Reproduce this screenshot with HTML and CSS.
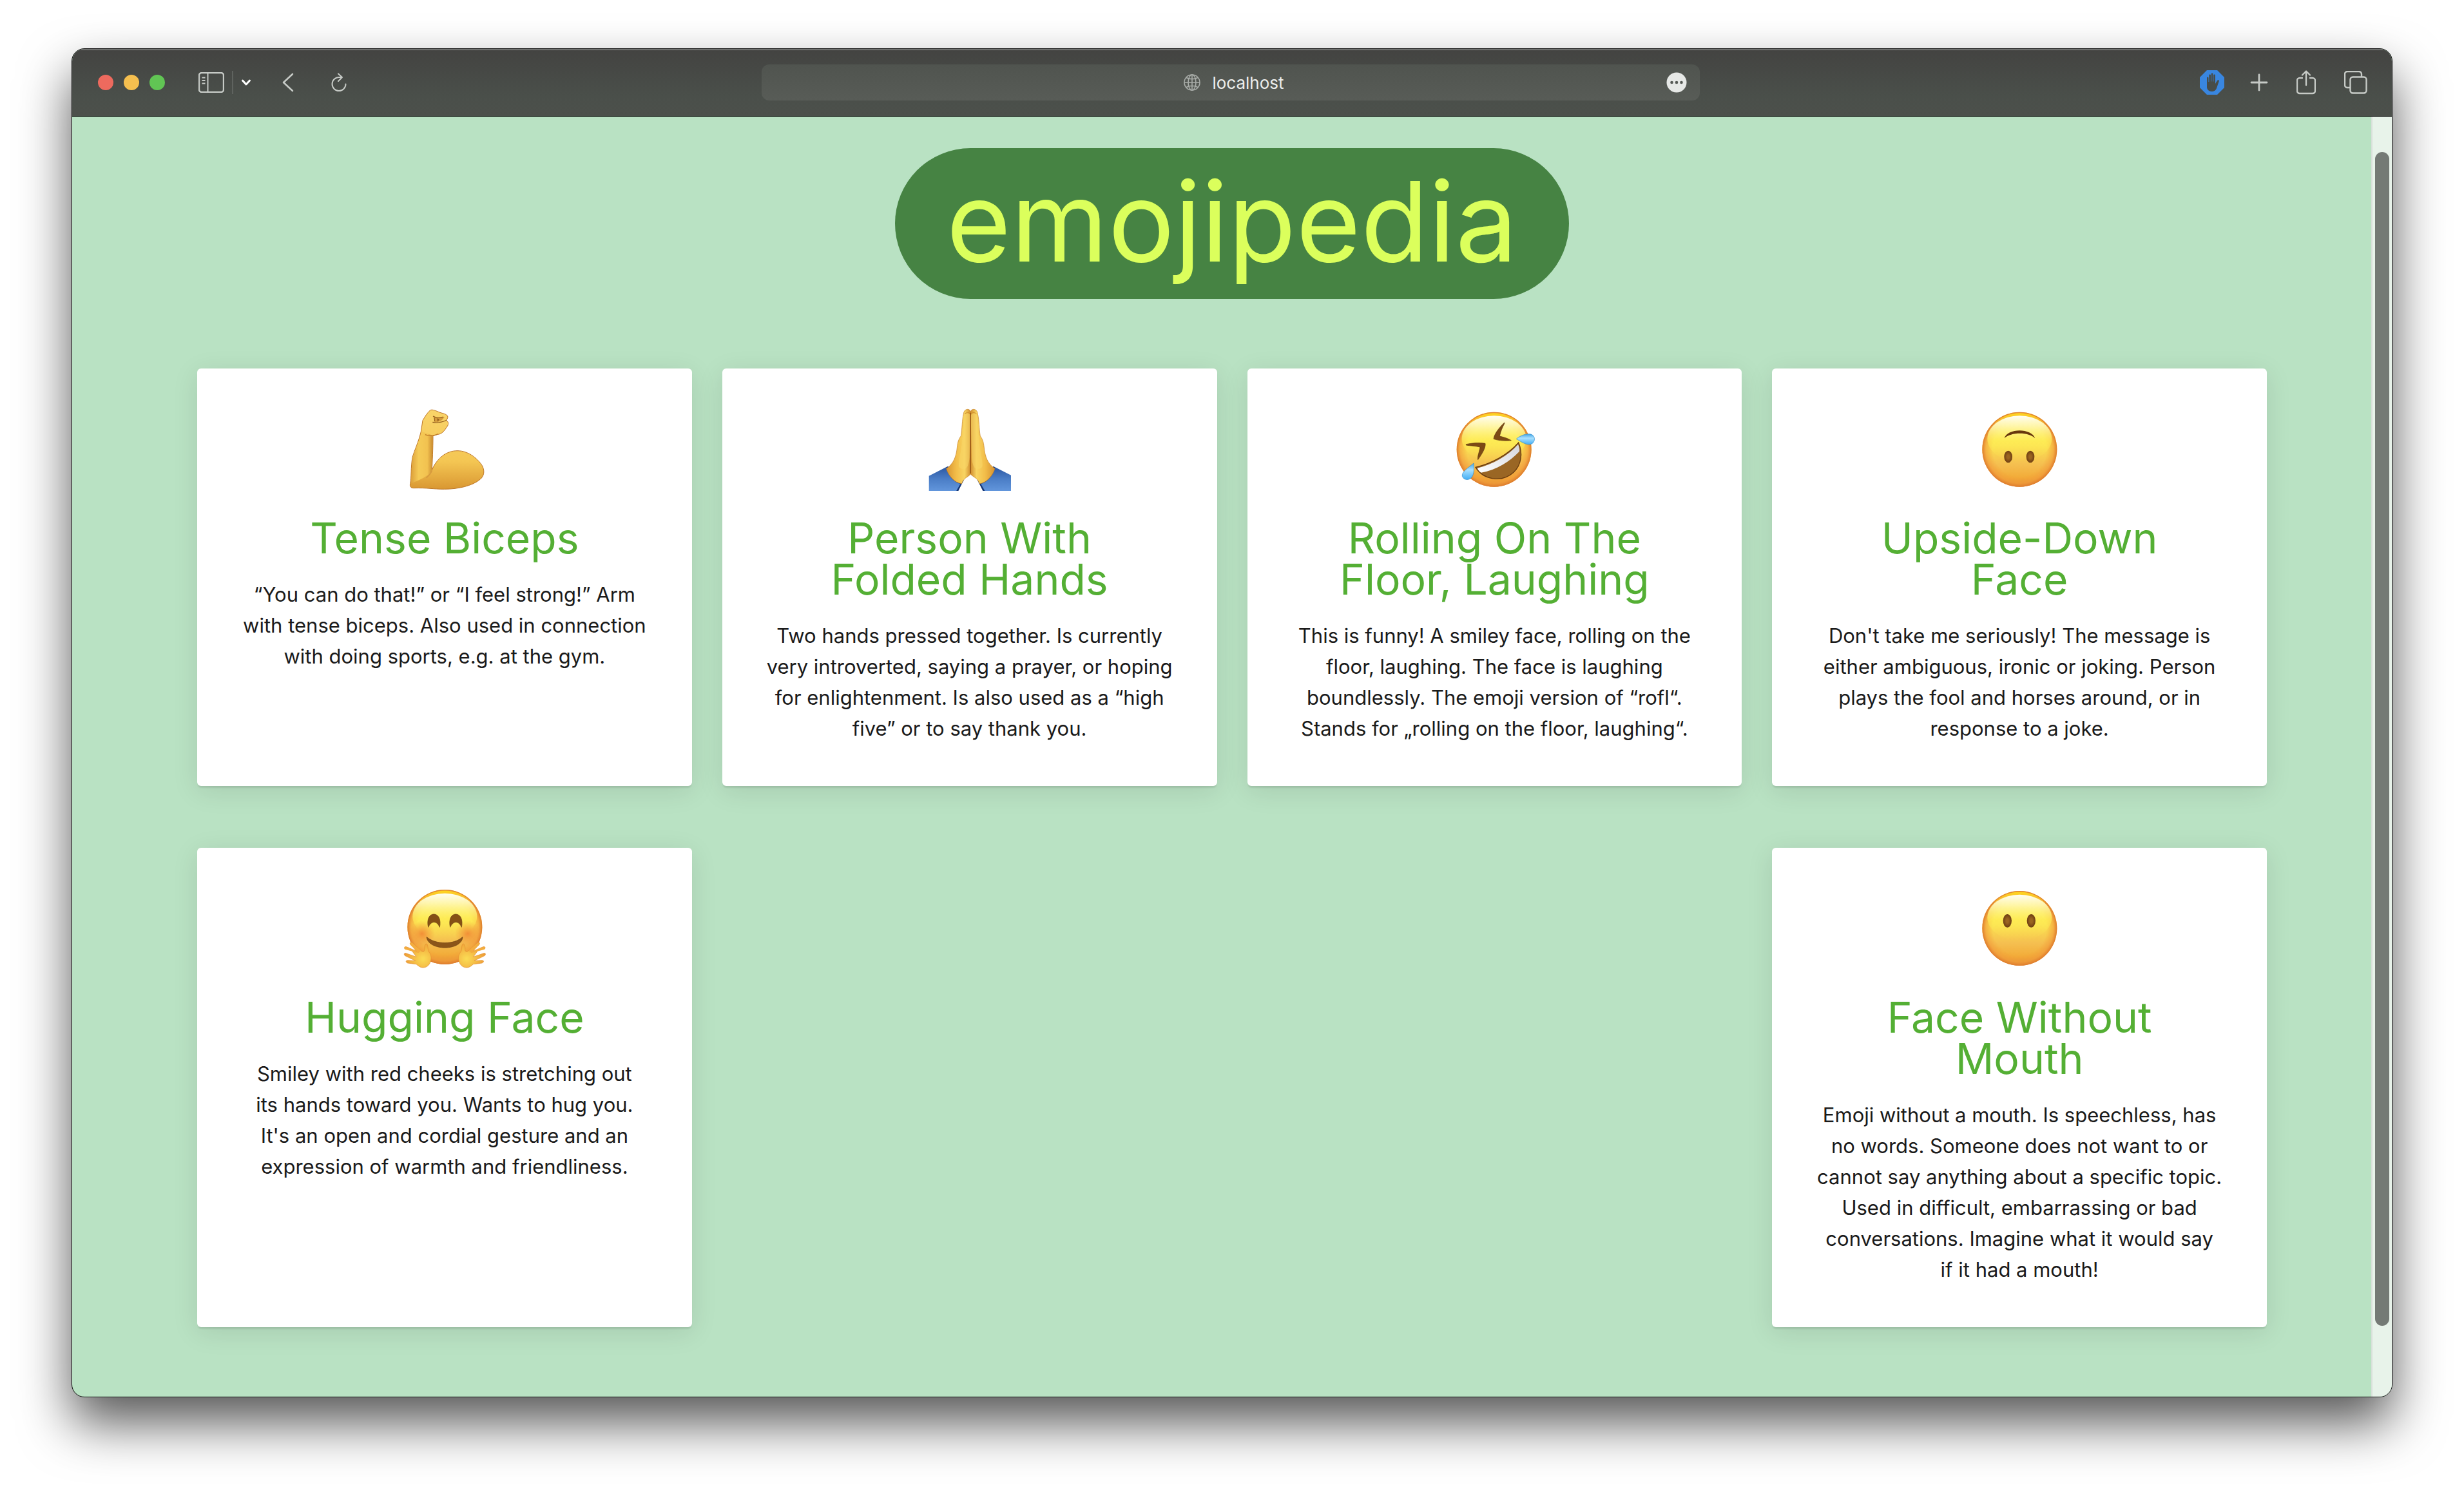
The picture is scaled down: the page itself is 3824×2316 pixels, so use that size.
FILE: index.html
```html
<!DOCTYPE html>
<html lang="en">
<head>
<meta charset="utf-8">
<title>emojipedia</title>
<link rel="stylesheet" href="styles.css">
</head>
<body>
<svg class="defs" width="0" height="0" aria-hidden="true">
  <defs>
    <linearGradient id="base" x1="0" y1="0" x2="0" y2="1">
      <stop offset="0" stop-color="#fdd535"/><stop offset=".45" stop-color="#fbe050"/><stop offset=".7" stop-color="#f5bf50"/><stop offset=".88" stop-color="#f2ab38"/><stop offset="1" stop-color="#e09234"/>
    </linearGradient>
    <radialGradient id="rim" cx=".5" cy=".5" r=".5">
      <stop offset=".72" stop-color="#f39a35" stop-opacity="0"/><stop offset=".9" stop-color="#f1983a" stop-opacity=".6"/><stop offset="1" stop-color="#dd7a2c"/>
    </radialGradient>
    <linearGradient id="shine" x1="0" y1="0" x2="0" y2="1">
      <stop offset="0" stop-color="#fffef4"/><stop offset=".22" stop-color="#fffab8" stop-opacity=".9"/><stop offset=".55" stop-color="#fff45a" stop-opacity=".6"/><stop offset="1" stop-color="#fbe050" stop-opacity="0"/>
    </linearGradient>
    <linearGradient id="topglow" x1="0" y1="0" x2="0" y2="1">
      <stop offset="0" stop-color="#ffd71f"/><stop offset="1" stop-color="#ffc733" stop-opacity="0"/>
    </linearGradient>
    <linearGradient id="skin" x1="0" y1="0" x2="0" y2="1">
      <stop offset="0" stop-color="#f9d469"/><stop offset=".65" stop-color="#f4c653"/><stop offset="1" stop-color="#d99732"/>
    </linearGradient>
    <linearGradient id="arm" x1="0" y1="0" x2="1" y2="0">
      <stop offset="0" stop-color="#dda13b"/><stop offset=".35" stop-color="#f5cb57"/><stop offset=".75" stop-color="#f2c250"/><stop offset="1" stop-color="#c98a30"/>
    </linearGradient>
    <linearGradient id="palm" x1="0" y1="0" x2="1" y2="0">
      <stop offset="0" stop-color="#d79331"/><stop offset=".4" stop-color="#f2bd49"/><stop offset=".75" stop-color="#f8d462"/><stop offset="1" stop-color="#cf8a2d"/>
    </linearGradient>
    <linearGradient id="sleeve" x1="0" y1="0" x2="0" y2="1">
      <stop offset="0" stop-color="#2a55a0"/><stop offset=".5" stop-color="#4a7dc6"/><stop offset="1" stop-color="#6296dc"/>
    </linearGradient>
    <linearGradient id="tear" x1="0" y1="0" x2="0" y2="1">
      <stop offset="0" stop-color="#3fa3e6"/><stop offset=".4" stop-color="#a9e0ff"/><stop offset="1" stop-color="#42aef5"/>
    </linearGradient>
    <linearGradient id="teeth" x1="0" y1="1" x2="1" y2="0">
      <stop offset="0" stop-color="#ffffff"/><stop offset="1" stop-color="#d5d6db"/>
    </linearGradient>
    <radialGradient id="eye"><stop offset=".3" stop-color="#9a6420"/><stop offset="1" stop-color="#6d3d12"/></radialGradient>
    <radialGradient id="blush"><stop offset="0" stop-color="#f07a2e" stop-opacity=".75"/><stop offset="1" stop-color="#f08a35" stop-opacity="0"/></radialGradient>
    <radialGradient id="hand" cx=".7" cy=".65" r=".7"><stop offset="0" stop-color="#fbdc55"/><stop offset="1" stop-color="#ee9d35"/></radialGradient>
    <g id="face">
      <circle r="174" fill="url(#base)"/>
      <circle r="174" fill="url(#rim)"/>
      <path d="M-118-122A170 170 0 0 1 118-122L90-90H-90Z" fill="url(#topglow)"/>
      <ellipse cy="-50" rx="150" ry="107" fill="url(#shine)"/>
    </g>
    <g id="hug">
      <path d="M118 350C104 336 106 330 86 342C80 334 84 330 92 331L142 352L112 322C104 312 114 308 120 313L160 349C168 355 174 356 177 346C176 330 177 318 186 317C195 321 190 340 196 354C206 364 210 382 205 398C200 418 184 429 168 428C154 427 146 418 138 412L98 407C88 403 88 394 98 394L134 396L90 375C78 370 80 358 90 361L138 378Z" fill="url(#hand)" stroke="#e38c30" stroke-width="2"/>
      <path d="M112 322C104 312 114 308 120 313L160 349L148 360L88 344C80 340 80 330 90 331L142 354Z" fill="#f3ad3f"/>
    </g>
  </defs>
</svg>

<div class="window">
  <header class="toolbar">
    <div class="side">
      <div class="lights"><span class="light red"></span><span class="light yellow"></span><span class="light green"></span></div>
      <div class="sidebar-group">
        <button class="tool" aria-label="Sidebar"><svg width="40" height="32" viewBox="0 0 40 32" fill="none" stroke="#c6cac6" stroke-width="2"><rect x="1" y="1" width="38" height="30" rx="4" stroke-width="2.4"/><path d="M14.500 1v30M5.500 8.500h5M5.500 13h5M5.500 17.500h5"/></svg></button>
        <span class="divider"></span>
        <button class="tool" aria-label="Tab groups"><svg width="16" height="12" viewBox="0 0 16 12" fill="none" stroke="#fff" stroke-width="3" stroke-linecap="round" stroke-linejoin="round"><path d="M2.500 3L8 9l5.500-6"/></svg></button>
      </div>
      <button class="tool back" aria-label="Back"><svg width="18" height="30" viewBox="0 0 18 30" fill="none" stroke="#c6cac6" stroke-width="2.600" stroke-linecap="round" stroke-linejoin="round"><path d="M16 2L2 15l14 13"/></svg></button>
      <button class="tool" aria-label="Reload"><svg width="24" height="30" viewBox="0 0 24 30" fill="none" stroke="#c6cac6" stroke-width="2" stroke-linecap="round" stroke-linejoin="round"><path d="M22.500 17.500A10.500 10.500 0 1 1 12 7h5M11 1.500L17 7l-6 6"/></svg></button>
    </div>
    <div class="address">
      <svg width="26" height="26" viewBox="0 0 26 26" fill="none" stroke="#a9ada9" stroke-width="1.600"><circle cx="13" cy="13" r="12"/><ellipse cx="13" cy="13" rx="6" ry="12"/><path d="M13 1v24M1 13h24M4 5.500c5 3 13 3 18 0M4 20.500c5-3 13-3 18 0"/></svg>
      <span>localhost</span>
      <button class="tool more" aria-label="Page menu"><svg width="32" height="32" viewBox="0 0 32 32"><circle cx="16" cy="16" r="15.500" fill="#e6e8e6"/><g fill="#555955"><circle cx="8.500" cy="16" r="2.300"/><circle cx="16" cy="16" r="2.300"/><circle cx="23.500" cy="16" r="2.300"/></g></svg></button>
    </div>
    <div class="side actions">
      <button class="tool blocker" aria-label="Content blocker"><svg width="38" height="38" viewBox="0 0 38 38"><path d="M11 0h16l11 11v16L27 38H11L0 27V11z" fill="#3986e0"/><path d="M11 12c0-2 2.500-2 2.500 0v6h.8V8c0-2 2.700-2 2.700 0v9.500h.7V6c0-2 2.800-2 2.800 0v11.500h.8V8c0-2 2.700-2 2.700 0v13l3-5c1-1.500 3.500-1 2.800 1L26 28c-1 3-4 5-7.500 5C14 33 11 30 11 26z" fill="#474c49"/></svg></button>
      <button class="tool" aria-label="New tab"><svg width="28" height="28" viewBox="0 0 28 28" stroke="#c6cac6" stroke-width="2.800" stroke-linecap="round"><path d="M14 2v24M2 14h24"/></svg></button>
      <button class="tool" aria-label="Share"><svg width="30" height="38" viewBox="0 0 30 38" fill="none" stroke="#c6cac6" stroke-width="2.400" stroke-linecap="round" stroke-linejoin="round"><path d="M9 12H5a4 4 0 0 0-4 4v16a4 4 0 0 0 4 4h20a4 4 0 0 0 4-4V16a4 4 0 0 0-4-4h-4M15 23V2M9 7.500L15 1.500l6 6"/></svg></button>
      <button class="tool" aria-label="Tab overview"><svg width="36" height="36" viewBox="0 0 36 36" fill="none" stroke="#c6cac6" stroke-width="2.400"><rect x="9.500" y="9.500" width="25" height="25" rx="4"/><path d="M27 9V5a4 4 0 0 0-4-4H5a4 4 0 0 0-4 4v17a4 4 0 0 0 4 4h4"/></svg></button>
    </div>
  </header>

  <main class="page">
    <h1 class="title">emojipedia</h1>
    <div class="cards">
      <article class="card">
        <svg class="emoji" viewBox="78 72 384 384" role="img" aria-label="Tense Biceps">
          <path d="M216 200C216 260 213 320 211 358C235 305 275 269 330 269C385 269 430 312 447 342C458 368 452 388 436 402C398 434 330 448 268 448C215 448 190 441 125 443C112 443 107 434 110 422C116 390 112 350 120 300C132 260 148 230 160 180L168 128C180 108 195 84 206 79C220 76 240 89 255 93C275 98 288 104 284 116L279 128C290 136 288 148 282 156C268 178 256 192 238 193Z" fill="url(#skin)" stroke="#bd7425" stroke-width="3"/>
          <path d="M215 198C216 260 213 320 209 362L202 374C180 392 150 408 114 420C117 380 115 340 122 300C136 255 150 230 164 180Z" fill="url(#arm)"/>
          <path d="M211 362C205 376 198 384 186 394" fill="none" stroke="#d79a3e" stroke-width="5" stroke-linecap="round"/>
          <path d="M180 194C195 202 222 200 240 191" fill="none" stroke="#c17d2a" stroke-width="4"/>
          <path d="M216 108L236 116L270 112C260 124 254 132 240 134L214 136L226 132L221 118Z" fill="#d39a3b"/>
          <path d="M216 108C232 117 252 116 264 111M222 115L224 132M235 118L239 130L244 120M214 136C235 142 258 136 279 127" fill="none" stroke="#925a1b" stroke-width="3.500"/>
        </svg>
        <h2 class="name">Tense Biceps</h2>
        <p class="meaning">“You can do that!” or “I feel strong!” Arm<br>with tense biceps. Also used in connection<br>with doing sports, e.g. at the gym.</p>
      </article>
      <article class="card">
        <svg class="emoji" viewBox="93 72 384 384" role="img" aria-label="Person With Folded Hands">
          <g id="pray">
            <path d="M95 386L182 342L258 406L230 457H95Z" fill="url(#sleeve)"/>
            <path d="M176 347L185 342C192 380 215 410 257 404L232 456L222 457L242 422C215 420 180 380 176 347Z" fill="#163675"/>
            <path d="M256 98C257 72 288 68 290 92V374C285 391 258 390 248 422C215 420 185 385 176 352C210 330 222 295 226 255C229 225 234 215 244 200C250 165 249 125 256 98Z" fill="url(#palm)" stroke="#c58128" stroke-width="2"/>
            <path d="M262 106C266 90 286 92 288 106L284 300C280 355 260 360 242 350C222 345 244 290 250 220Z" fill="#f8d565" opacity=".6"/>
            <path d="M261 98C268 90 282 89 289 99" fill="none" stroke="#cd8d2c" stroke-width="3"/>
          </g>
          <use href="#pray" transform="matrix(-1 0 0 1 578 0)"/>
          <path d="M289 92V374" stroke="#965413" stroke-width="4"/>
        </svg>
        <h2 class="name">Person With<br>Folded Hands</h2>
        <p class="meaning">Two hands pressed together. Is currently<br>very introverted, saying a prayer, or hoping<br>for enlightenment. Is also used as a “high<br>five” or to say thank you.</p>
      </article>
      <article class="card">
        <svg class="emoji" viewBox="76 72 384 384" role="img" aria-label="Rolling On The Floor, Laughing">
          <use href="#face" x="267" y="263"/>
          <path d="M137 239C165 233 197 230 226 235C230 255 208 288 192 311C188 298 200 270 202 252C184 247 155 246 137 243Z" fill="#7d4a15" stroke="#5e340d" stroke-width="2"/>
          <path d="M315 138C292 160 268 190 265 214C290 224 325 222 347 221C332 211 312 206 293 201C298 178 307 158 316 141Z" fill="#7d4a15" stroke="#5e340d" stroke-width="2"/>
          <path d="M181 346C255 330 335 285 381 231C402 280 395 335 358 370C300 422 215 402 181 346Z" fill="#9a6624" stroke="#683b10" stroke-width="4"/>
          <path d="M189 350C260 333 333 292 379 239C383 248 387 262 385 272C340 320 280 357 207 371C199 366 193 359 189 350Z" fill="url(#teeth)"/>
          <path d="M371 214C392 196 420 188 438 192C460 198 460 226 444 236C424 248 397 230 371 214Z" fill="url(#tear)" stroke="#2f8bcb" stroke-width="2"/>
          <path d="M172 327C174 348 176 377 162 394C150 408 126 407 119 388C115 368 145 350 172 327Z" fill="url(#tear)" stroke="#2f8bcb" stroke-width="2"/>
        </svg>
        <h2 class="name">Rolling On The<br>Floor, Laughing</h2>
        <p class="meaning">This is funny! A smiley face, rolling on the<br>floor, laughing. The face is laughing<br>boundlessly. The emoji version of “rofl“.<br>Stands for „rolling on the floor, laughing“.</p>
      </article>
      <article class="card">
        <svg class="emoji" viewBox="90 72 384 384" role="img" aria-label="Upside-Down Face">
          <use href="#face" x="283" y="263"/>
          <path d="M212 211C225 164 338 162 355 211C325 180 242 181 212 211Z" fill="#67370d"/>
          <g fill="url(#eye)"><ellipse cx="230" cy="297" rx="19" ry="28"/><ellipse cx="333" cy="297" rx="19" ry="28"/></g>
        </svg>
        <h2 class="name">Upside-Down<br>Face</h2>
        <p class="meaning">Don't take me seriously! The message is<br>either ambiguous, ironic or joking. Person<br>plays the fool and horses around, or in<br>response to a joke.</p>
      </article>
      <article class="card">
        <svg class="emoji" viewBox="78 56 384 384" role="img" aria-label="Hugging Face">
          <use href="#face" x="271" y="239"/>
          <circle cx="165" cy="270" r="60" fill="url(#blush)"/><circle cx="378" cy="270" r="60" fill="url(#blush)"/>
          <g fill="#855015" stroke="#683b10" stroke-width="2"><path d="M194 240C186 205 198 179 220 179C243 179 254 207 247 240C235 210 208 208 194 240Z"/><path d="M296 240C288 205 300 179 322 179C345 179 356 207 349 240C337 210 310 208 296 240Z"/></g>
          <path d="M186 285C228 322 315 322 354 285C352 352 192 352 186 285Z" fill="#8b5519" stroke="#683b10" stroke-width="2"/>
          <use href="#hug"/><use href="#hug" transform="matrix(-1 0 0 1 542 0)"/>
        </svg>
        <h2 class="name">Hugging Face</h2>
        <p class="meaning">Smiley with red cheeks is stretching out<br>its hands toward you. Wants to hug you.<br>It's an open and cordial gesture and an<br>expression of warmth and friendliness.</p>
      </article>
      <article class="card last">
        <svg class="emoji" viewBox="90 56 384 384" role="img" aria-label="Face Without Mouth">
          <use href="#face" x="283" y="245"/>
          <g fill="url(#eye)"><ellipse cx="226" cy="210" rx="20" ry="31"/><ellipse cx="337" cy="210" rx="20" ry="31"/></g>
        </svg>
        <h2 class="name">Face Without<br>Mouth</h2>
        <p class="meaning">Emoji without a mouth. Is speechless, has<br>no words. Someone does not want to or<br>cannot say anything about a specific topic.<br>Used in difficult, embarrassing or bad<br>conversations. Imagine what it would say<br>if it had a mouth!</p>
      </article>
    </div>
    <div class="scrollbar"><div class="thumb"></div></div>
  </main>
</div>
</body>
</html>
```
FILE: styles.css
```css
* { box-sizing: border-box; }

body {
  margin: 0;
  padding: 75px 111px 146px;
  min-height: 100vh;
  background: #fff;
  color: #1a1a1a;
  font-family: Inter, "Liberation Sans", sans-serif;
}

.defs { position: absolute; }

.window {
  border: 1px solid #0a0a0a;
  border-radius: 20px;
  overflow: hidden;
  background: #b9e2c3;
  box-shadow: 0 40px 80px rgba(0, 0, 0, 0.66);
}

/* Browser toolbar */
.toolbar {
  display: grid;
  grid-template-columns: 1fr 1456px 1fr;
  align-items: center;
  height: 105px;
  padding-right: 4px;
  border-bottom: 1px solid #000;
  background: linear-gradient(#434341, #4a4f4a 70%, #4c504b);
  box-shadow: inset 0 2px #6f716f;
}

.side { display: flex; align-items: center; padding: 0 34px 0 40px; }
.lights { display: flex; gap: 16px; }
.light { width: 24px; height: 24px; border-radius: 50%; }
.red { background: #ed6a5e; }
.yellow { background: #f5bf4f; }
.green { background: #61c554; }
.sidebar-group { display: flex; align-items: center; gap: 12px; margin-left: 52px; }
.divider { width: 2px; height: 36px; background: #5f635f; }

.tool {
  display: flex;
  padding: 0;
  border: 0;
  background: none;
}

.back { margin: 0 58px 0 48px; }
.actions { justify-content: flex-end; gap: 44px; }
.blocker { margin-right: -4px; }

.address {
  position: relative;
  display: flex;
  align-items: center;
  justify-content: center;
  gap: 18px;
  height: 56px;
  padding-left: 10px;
  border-radius: 12px;
  background: linear-gradient(#50544f, #585c57);
  color: #eceeec;
  font-size: 26px;
}

.more { position: absolute; right: 20px; }

/* Page */
.page {
  position: relative;
  display: flex;
  flex-direction: column;
  align-items: center;
  gap: 108px;
  padding: 49px 194px 108px;
}

.title {
  margin: 0;
  padding: 16px 80px 24px;
  border-radius: 120px;
  background: #468343;
  color: #dbff5c;
  font-size: 172px;
  font-weight: 400;
  line-height: 194px;
}

.cards {
  display: grid;
  grid-template-columns: repeat(4, 1fr);
  gap: 96px 47px;
  align-self: stretch;
}

.card {
  display: flex;
  flex-direction: column;
  align-items: center;
  padding: 62px 60px 65px;
  border-radius: 6px;
  background: #fff;
  text-align: center;
  box-shadow: 0 4px 2px -1px rgba(0, 0, 0, 0.09), 0 8px 40px rgba(0, 0, 0, 0.1);
}

.last { grid-column: 4; }
.emoji { width: 128px; height: 128px; }

.name {
  margin: 41px 0 32px;
  color: #54af34;
  font-size: 66px;
  font-weight: 400;
  line-height: 64px;
}

.meaning {
  margin: 0;
  font-size: 31px;
  line-height: 48px;
}

.scrollbar {
  position: absolute;
  top: 0;
  right: 0;
  bottom: 0;
  width: 32px;
  padding: 55px 4px 110px;
  border-left: 2px solid #dae0db;
  background: #e8f3ea;
}

.thumb {
  width: 22px;
  height: 100%;
  border-radius: 11px;
  background: #747a75;
}
```
